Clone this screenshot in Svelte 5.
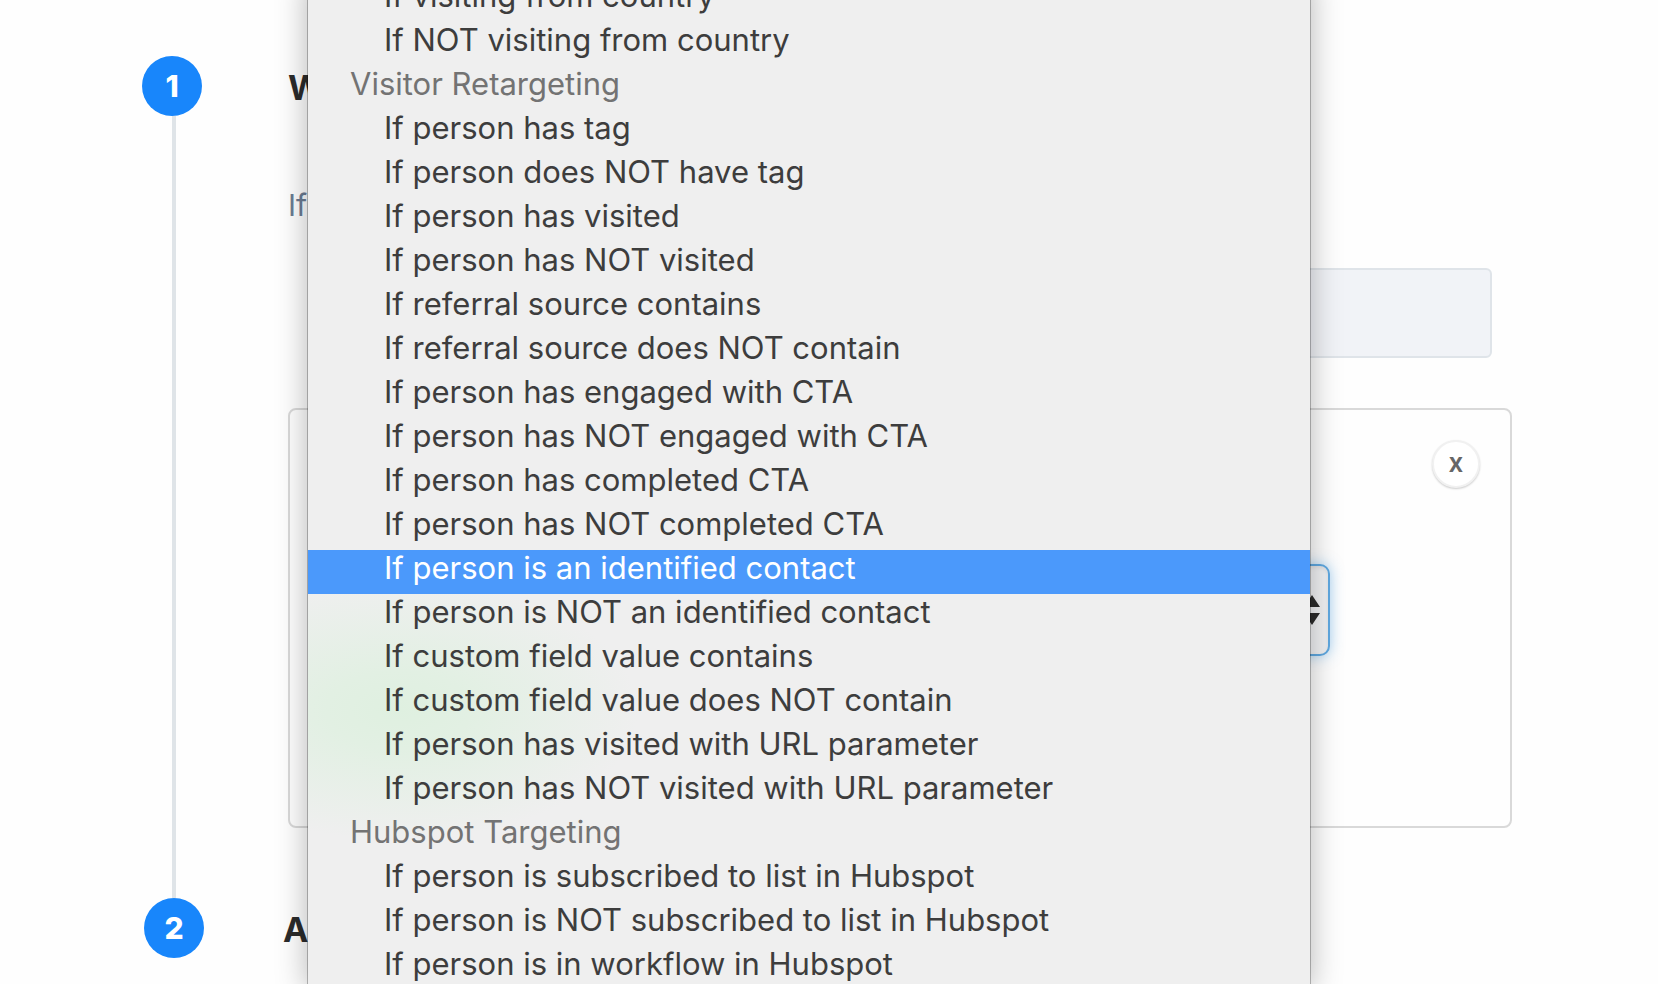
<script lang="ts">
	type Group = { label?: string; options: string[] };

	const groups: Group[] = [
		{
			options: ['If visiting from country', 'If NOT visiting from country']
		},
		{
			label: 'Visitor Retargeting',
			options: [
				'If person has tag',
				'If person does NOT have tag',
				'If person has visited',
				'If person has NOT visited',
				'If referral source contains',
				'If referral source does NOT contain',
				'If person has engaged with CTA',
				'If person has NOT engaged with CTA',
				'If person has completed CTA',
				'If person has NOT completed CTA',
				'If person is an identified contact',
				'If person is NOT an identified contact',
				'If custom field value contains',
				'If custom field value does NOT contain',
				'If person has visited with URL parameter',
				'If person has NOT visited with URL parameter'
			]
		},
		{
			label: 'Hubspot Targeting',
			options: [
				'If person is subscribed to list in Hubspot',
				'If person is NOT subscribed to list in Hubspot',
				'If person is in workflow in Hubspot'
			]
		}
	];

	let selected = $state('If person is an identified contact');
</script>

<main class="page">
	<section class="step">
		<div class="rail">
			<span class="marker">1</span>
			<span class="line"></span>
		</div>
		<div class="content">
			<h2>W</h2>
			<p>If</p>
			<input class="summary" type="text" aria-label="If" disabled />
			<div class="card">
				<button class="close" type="button">x</button>
				<div class="picker">
					<select aria-label="If" bind:value={selected}>
						{#each groups as group}
							{#each group.options as option}
								<option>{option}</option>
							{/each}
						{/each}
					</select>
					<svg class="arrows" viewBox="0 0 16 30" aria-hidden="true">
						<path d="M8 0l8 12H0zM8 30l8-12H0z" />
					</svg>
				</div>
			</div>
		</div>
	</section>

	<section class="step next">
		<div class="rail">
			<span class="marker">2</span>
		</div>
		<div class="content">
			<h2>A</h2>
		</div>
	</section>

	<div class="menu" role="listbox" aria-label="If">
		{#each groups as group}
			{#if group.label}
				<div class="group">{group.label}</div>
			{/if}
			{#each group.options as option}
				<button
					class="option"
					class:active={option === selected}
					type="button"
					role="option"
					aria-selected={option === selected}
					onclick={() => (selected = option)}
				>
					{option}
				</button>
			{/each}
		{/each}
	</div>
</main>

<style>
	:global(body) {
		background: #fefefe;
	}
	.page {
		position: relative;
		box-sizing: border-box;
		min-height: 100vh;
		padding: 56px 146px 0 142px;
		overflow: hidden;
		font-family: Inter, 'Liberation Sans', sans-serif;
		color: #2b2b2b;
	}
	.step {
		display: flex;
		gap: 82px;
	}
	.step.next {
		gap: 77px;
	}
	.rail {
		display: flex;
		flex-direction: column;
		align-items: center;
		flex: none;
		width: 64px;
	}
	.marker {
		width: 60px;
		height: 60px;
		border-radius: 50%;
		background: #1886fb;
		color: #fff;
		font-size: 30px;
		font-weight: 800;
		line-height: 60px;
		text-align: center;
	}
	.step:first-child .marker {
		align-self: flex-start;
	}
	.line {
		flex: 1;
		width: 4px;
		background: #dfe4e8;
	}
	.content {
		flex: 1;
		min-width: 0;
		padding-bottom: 70px;
	}
	.next .content {
		padding-bottom: 0;
	}
	h2 {
		margin: 0;
		font-size: 34px;
		font-weight: 700;
		line-height: 64px;
	}
	p {
		margin: 65px 0 43px;
		font-size: 30px;
		line-height: 40px;
		color: #6b7c93;
	}
	.summary {
		display: block;
		box-sizing: border-box;
		width: calc(100% - 60px);
		height: 90px;
		margin: 0 20px 50px 40px;
		border: 2px solid #dfe4e9;
		border-radius: 6px;
		background: #f1f3f7;
	}
	.card {
		box-sizing: border-box;
		min-height: 420px;
		padding: 30px 30px 0;
		border: 2px solid #d9d9d9;
		border-radius: 8px;
	}
	.close {
		display: block;
		box-sizing: border-box;
		width: 48px;
		height: 48px;
		margin-left: auto;
		padding: 0 0 2px;
		border: 2px solid #f1f1f1;
		border-radius: 50%;
		background: #fff;
		box-shadow: 0 1px 2px rgba(0, 0, 0, 0.2);
		color: #666;
		font: 600 26px/38px Inter, sans-serif;
	}
	.picker {
		position: relative;
		margin: 76px 150px 0 20px;
	}
	select {
		display: block;
		box-sizing: border-box;
		width: 100%;
		height: 92px;
		padding: 0 40px;
		appearance: none;
		border: 2px solid #5fa8e0;
		border-radius: 10px;
		background: #f1f2f4;
		box-shadow:
			inset 0 2px 4px rgba(0, 0, 0, 0.08),
			0 0 14px rgba(82, 168, 236, 0.5);
		font: 30px Inter, sans-serif;
	}
	.arrows {
		position: absolute;
		top: 31px;
		right: 10px;
		width: 16px;
		height: 30px;
		fill: #2b2b2b;
	}
	.menu {
		position: absolute;
		top: -22px;
		left: 308px;
		right: 348px;
		background:
			radial-gradient(ellipse 240px 130px at 90px 732px, #dff0e0, #e2f0e3 30%, rgba(239, 239, 239, 0)),
			#efefef;
		box-shadow:
			0 0 0 1px rgba(0, 0, 0, 0.25),
			0 0 30px rgba(0, 0, 0, 0.3);
	}
	.group,
	.option {
		display: block;
		box-sizing: border-box;
		width: 100%;
		height: 44px;
		padding: 0 0 8px 76px;
		border: 0;
		background: none;
		color: #3d3d3d;
		font: 31px/36px Inter, sans-serif;
		text-align: left;
		white-space: nowrap;
	}
	.group {
		padding-left: 42px;
		color: #737373;
	}
	.option.active {
		background: #4b99fb;
		color: #fff;
	}
</style>
